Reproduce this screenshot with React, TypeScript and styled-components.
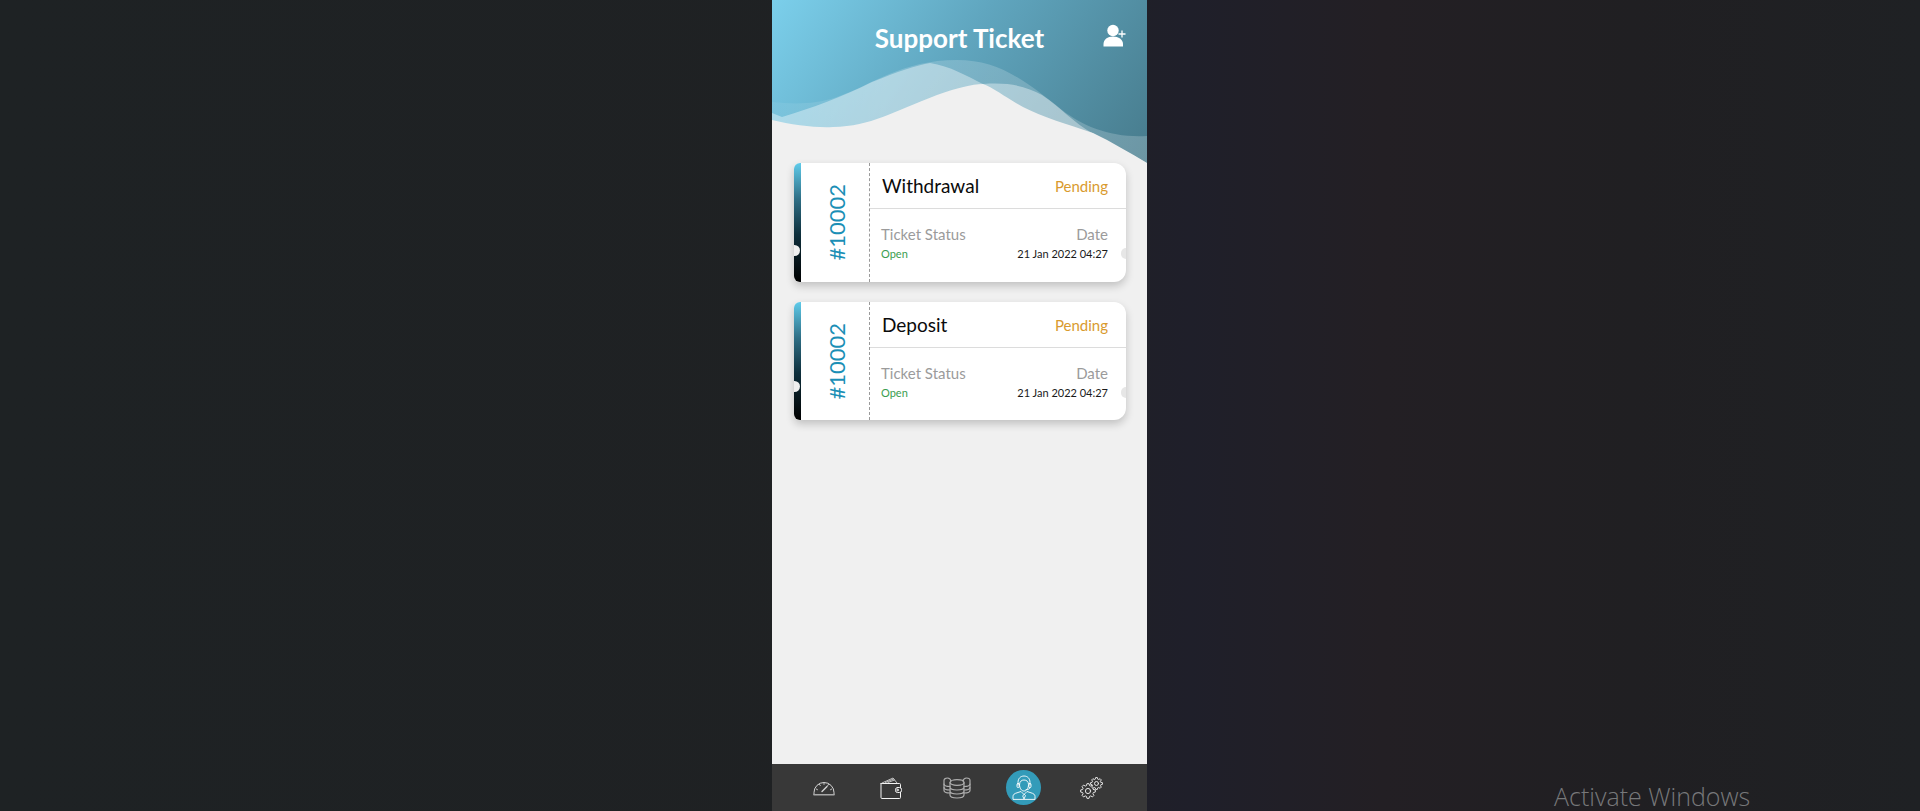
import React from 'react';
import styled, { createGlobalStyle } from 'styled-components';

const GlobalStyle = createGlobalStyle`
  html, body {
    margin: 0;
    padding: 0;
    height: 100%;
    overflow: hidden;
    background: #1f2124;
    font-family: Lato, 'Liberation Sans', sans-serif;
  }
`;

const Desktop = styled.div`
  position: relative;
  height: 811px;
  display: flex;
  justify-content: center;
  padding-right: 1px;
  background: linear-gradient(90deg, #1e2224 0%, #1f2123 50%, #1f1f2a 62%, #231f24 72%, #201f22 85%, #1f2124 100%);
`;

const Phone = styled.div`
  width: 375px;
  height: 811px;
  display: flex;
  flex-direction: column;
  background: #f0f0f0;
`;

const Hero = styled.header`
  position: relative;
  flex: none;
  height: 163px;
  background: linear-gradient(125deg, #7bcfeb 0%, #60a6bf 45%, #477b8c 100%);
  overflow: hidden;
`;

const Waves = styled.svg`
  position: absolute;
  left: 0;
  top: 0;
  width: 375px;
  height: 163px;
`;

const HeroBar = styled.div`
  position: relative;
  display: flex;
  justify-content: center;
  padding-top: 21px;
`;

const Title = styled.h1`
  margin: 0;
  font-size: 26px;
  line-height: 34px;
  font-weight: 700;
  color: #fff;
`;

const AddButton = styled.span`
  position: absolute;
  right: 21px;
  top: 24px;
  display: flex;
`;

const Tickets = styled.main`
  flex: 1;
  display: flex;
  flex-direction: column;
  gap: 20px;
  padding: 0 21px 0 22px;
`;

const Card = styled.article<{ $height: number }>`
  position: relative;
  display: flex;
  height: ${(p) => p.$height}px;
  background: #fff;
  border-radius: 6px 12px 12px 6px;
  box-shadow: 0 4px 8px rgba(0, 0, 0, 0.2);
`;

const Strip = styled.div`
  flex: none;
  width: 7px;
  border-radius: 6px 0 0 6px;
  background: linear-gradient(180deg, #5fcbea 0%, #2f6f86 30%, #0e2f3c 60%, #000 100%);
`;

const Notch = styled.span<{ $side: 'left' | 'right'; $top: number }>`
  position: absolute;
  top: ${(p) => p.$top}px;
  width: ${(p) => (p.$side === 'left' ? 6 : 5)}px;
  height: 11px;
  ${(p) =>
    p.$side === 'left'
      ? 'left: 0; background: #f0f0f0; border-radius: 0 6px 6px 0;'
      : 'right: 0; background: #e6e6e6; border-radius: 6px 0 0 6px;'}
`;

const IdColumn = styled.div`
  flex: none;
  box-sizing: border-box;
  width: 69px;
  padding-left: 3px;
  display: flex;
  align-items: center;
  justify-content: center;
  border-right: 1px dashed #9a9a9a;
`;

const TicketId = styled.span`
  writing-mode: vertical-rl;
  transform: rotate(180deg);
  font-size: 22px;
  line-height: 24px;
  color: #1b8fb6;
`;

const Body = styled.div`
  flex: 1;
  min-width: 0;
  display: flex;
  flex-direction: column;
`;

const TitleRow = styled.div`
  flex: none;
  height: 46px;
  box-sizing: border-box;
  display: flex;
  align-items: center;
  justify-content: space-between;
  padding: 0 18px 0 12px;
  border-bottom: 1px solid #dcdcdc;
`;

const TicketTitle = styled.span`
  font-size: 19px;
  color: #0b0b0b;
`;

const Pending = styled.span`
  font-size: 15px;
  color: #d99a2e;
`;

const Details = styled.div`
  display: flex;
  justify-content: space-between;
  padding: 16px 18px 0 11px;
`;

const Field = styled.div<{ $end?: boolean }>`
  display: flex;
  flex-direction: column;
  align-items: ${(p) => (p.$end ? 'flex-end' : 'flex-start')};
  gap: 3px;
`;

const FieldLabel = styled.span`
  font-size: 15px;
  line-height: 18px;
  color: #9b9b9b;
`;

const OpenValue = styled.span`
  font-size: 11px;
  line-height: 16px;
  color: #3a9e4f;
`;

const DateValue = styled.span`
  font-size: 11px;
  line-height: 16px;
  color: #1a1a1a;
`;

const BottomNav = styled.nav`
  flex: none;
  height: 47px;
  display: grid;
  grid-template-columns: 67px 67px 66px 67px 68px;
  align-items: center;
  justify-items: center;
  padding-left: 18px;
  background: #383838;
`;

const NavCircle = styled.span<{ $active?: boolean }>`
  width: 35px;
  height: 35px;
  display: flex;
  align-items: center;
  justify-content: center;
  border-radius: 50%;
  background: ${(p) => (p.$active ? '#339bb9' : 'transparent')};
`;

const ActivateWindows = styled.div`
  position: absolute;
  left: 1554px;
  top: 780px;
  font-family: 'Open Sans', sans-serif;
  font-weight: 300;
  font-size: 25px;
  line-height: 32px;
  color: #77787a;
  white-space: nowrap;
`;

const Icon = styled.svg`
  display: block;
  fill: none;
  stroke-linecap: round;
  stroke-linejoin: round;
`;

const PersonPlus = () => (
  <svg width="23" height="23" viewBox="0 0 23 23">
    <circle cx="10" cy="6.5" r="5.7" fill="#fff" />
    <path d="M0.5 22.5v-2.5c0-4.5 4-7.5 9.5-7.5s10 3 10 7.5v2.5z" fill="#fff" />
    <path d="M19 6.5v7M15.5 10h7" stroke="#fff" strokeWidth="1.3" />
  </svg>
);

const GaugeIcon = () => (
  <Icon width="22" height="16" viewBox="0 0 22 16" stroke="#d4d4d4" strokeWidth="1">
    <path d="M1 14.5V12.5a10 10 0 0 1 20 0v2" />
    <path d="M1 14.8h20" stroke="#a8a8a8" strokeWidth="1.6" />
    <path d="M9 11.5l5-5" strokeWidth="1.4" />
    <path d="M3.2 9l1.3.7M6.5 4.4l.8 1.2M11 3v1.4M15.5 4.4l-.8 1.2M18.8 9l-1.3.7" strokeWidth="0.9" />
  </Icon>
);

const WalletIcon = () => (
  <Icon width="22" height="22" viewBox="0 0 22 22" stroke="#f4f4f4" strokeWidth="1">
    <path d="M1 6.500h18.500a1 1 0 0 1 1 1v3M20.500 15.500v5a1 1 0 0 1-1 1H2a1 1 0 0 1-1-1V6.500" />
    <path d="M2 6l11-5 4 5M5.500 5.500l8-3.500M8 5.500l6.500-2.500" stroke="#cfcfcf" strokeWidth="0.9" />
    <rect x="15.500" y="10.500" width="6" height="5" rx="2" />
    <circle cx="17.500" cy="13" r="0.8" />
  </Icon>
);

const StackIcon = () => (
  <Icon width="28" height="23" viewBox="0 0 28 23" stroke="#adadad" strokeWidth="1.2">
    <path d="M8 5.200C7.600 3 6 2 4.500 2S1 2.800 1 4.500v10c0 1.400 2.500 2.500 6 2.500" />
    <path d="M1 8c0 1.400 2.500 2.500 6 2.500M1 11.500c0 1.400 2.500 2.500 6 2.500" />
    <path d="M20 5.200C20.400 3 22 2 23.500 2S27 2.800 27 4.500v10c0 1.400-2.500 2.500-6 2.500" />
    <path d="M27 8c0 1.400-2.500 2.500-6 2.500M27 11.500c0 1.400-2.500 2.500-6 2.500" />
    <ellipse cx="14" cy="6.500" rx="7" ry="2.800" />
    <path d="M7 6.500v12.500c0 1.800 3.200 3 7 3s7-1.200 7-3V6.500M7 11c0 1.800 3.200 3 7 3s7-1.200 7-3M7 15c0 1.800 3.200 3 7 3s7-1.200 7-3" />
  </Icon>
);

const AgentIcon = () => (
  <Icon width="24" height="25" viewBox="0 0 24 25" stroke="#fff" strokeWidth="0.9">
    <path d="M7.500 9.500c0 4 2 6.500 4.500 6.500s4.500-2.500 4.500-6.500c0-3-2-4.500-4.500-4.500s-4.500 1.500-4.500 4.500z" />
    <path d="M6 10V7.500C6 3.500 8.500 1 12 1s6 2.500 6 6.500V10" />
    <rect x="5" y="8.500" width="2.200" height="4" rx="1" />
    <rect x="16.800" y="8.500" width="2.200" height="4" rx="1" />
    <path d="M18 12.500c0 1.500-1.500 2-4 2.200" />
    <path d="M1 24v-2.500c0-2 1.500-3 4-3.700l4-1.300 3 3 3-3 4 1.300c2.500.7 4 1.700 4 3.700V24z" />
    <path d="M12 19.500l-1.300 1.500 1.300 3 1.300-3z" />
  </Icon>
);

// outline of a cog: teeth alternate between the outer and the inner radius
const gearPath = (cx: number, cy: number, outer: number, inner: number, teeth: number) => {
  const step = (Math.PI * 2) / teeth;
  const points: string[] = [];
  for (let i = 0; i < teeth; i++) {
    const a = i * step;
    const corners: [number, number][] = [
      [inner, a - step * 0.36],
      [outer, a - step * 0.18],
      [outer, a + step * 0.18],
      [inner, a + step * 0.36],
    ];
    corners.forEach(([r, t]) => {
      points.push(`${(cx + r * Math.cos(t)).toFixed(2)} ${(cy + r * Math.sin(t)).toFixed(2)}`);
    });
  }
  return `M${points.join('L')}Z`;
};

const GearsIcon = () => (
  <Icon width="23" height="22" viewBox="0 0 23 22" stroke="#e4e4e4" strokeWidth="1">
    <path d={gearPath(8, 14, 7.4, 5.6, 8)} />
    <circle cx="8" cy="14" r="2.6" />
    <path d={gearPath(16.5, 6.500, 6, 4.500, 8)} fill="#383838" />
    <circle cx="16.500" cy="6.500" r="2" />
  </Icon>
);

const tickets = [
  { title: 'Withdrawal', height: 119, notchLeft: 82, notchRight: 85 },
  { title: 'Deposit', height: 118, notchLeft: 79, notchRight: 85 },
];

const App = () => {
  return (
    <Desktop>
      <GlobalStyle />
      <Phone>
        <Hero>
          <Waves viewBox="0 0 375 163">
            <defs>
              <linearGradient id="backWave" x1="0" y1="0" x2="1" y2="0">
                <stop offset="0" stopColor="#fff" stopOpacity="0.06" />
                <stop offset="0.3" stopColor="#fff" stopOpacity="0.17" />
                <stop offset="1" stopColor="#fff" stopOpacity="0.2" />
              </linearGradient>
            </defs>
            <path
              d="M0 102C20 104 42 105 65 97C100 85 130 60 185 60C225 60 250 78 290 110C312 127 340 138 375 136V163H0Z"
              fill="url(#backWave)"
            />
            <path
              d="M0 113L10 117C40 108 70 97 100 82C125 72 145 65 158 63C178 66 195 76 211 84C240 82 255 87 270 95C290 108 300 122 322 134L375 163H0Z"
              fill="#fff"
              fillOpacity="0.38"
            />
            <path
              d="M0 120C20 125 45 128 61 127C100 126 120 112 165 95C185 88 200 84 211 84C222 88 236 99 251 107C270 117 295 124 321 133C340 142 358 153 375 163H0Z"
              fill="#f0f0f0"
            />
          </Waves>
          <HeroBar>
            <Title>Support Ticket</Title>
            <AddButton>
              <PersonPlus />
            </AddButton>
          </HeroBar>
        </Hero>
        <Tickets>
          {tickets.map((t) => (
            <Card key={t.title} $height={t.height}>
              <Strip />
              <Notch $side="left" $top={t.notchLeft} />
              <Notch $side="right" $top={t.notchRight} />
              <IdColumn>
                <TicketId>#10002</TicketId>
              </IdColumn>
              <Body>
                <TitleRow>
                  <TicketTitle>{t.title}</TicketTitle>
                  <Pending>Pending</Pending>
                </TitleRow>
                <Details>
                  <Field>
                    <FieldLabel>Ticket Status</FieldLabel>
                    <OpenValue>Open</OpenValue>
                  </Field>
                  <Field $end>
                    <FieldLabel>Date</FieldLabel>
                    <DateValue>21 Jan 2022 04:27</DateValue>
                  </Field>
                </Details>
              </Body>
            </Card>
          ))}
        </Tickets>
        <BottomNav>
          <NavCircle>
            <GaugeIcon />
          </NavCircle>
          <NavCircle>
            <WalletIcon />
          </NavCircle>
          <NavCircle>
            <StackIcon />
          </NavCircle>
          <NavCircle $active>
            <AgentIcon />
          </NavCircle>
          <NavCircle>
            <GearsIcon />
          </NavCircle>
        </BottomNav>
      </Phone>
      <ActivateWindows>Activate Windows</ActivateWindows>
    </Desktop>
  );
};

export default App;
